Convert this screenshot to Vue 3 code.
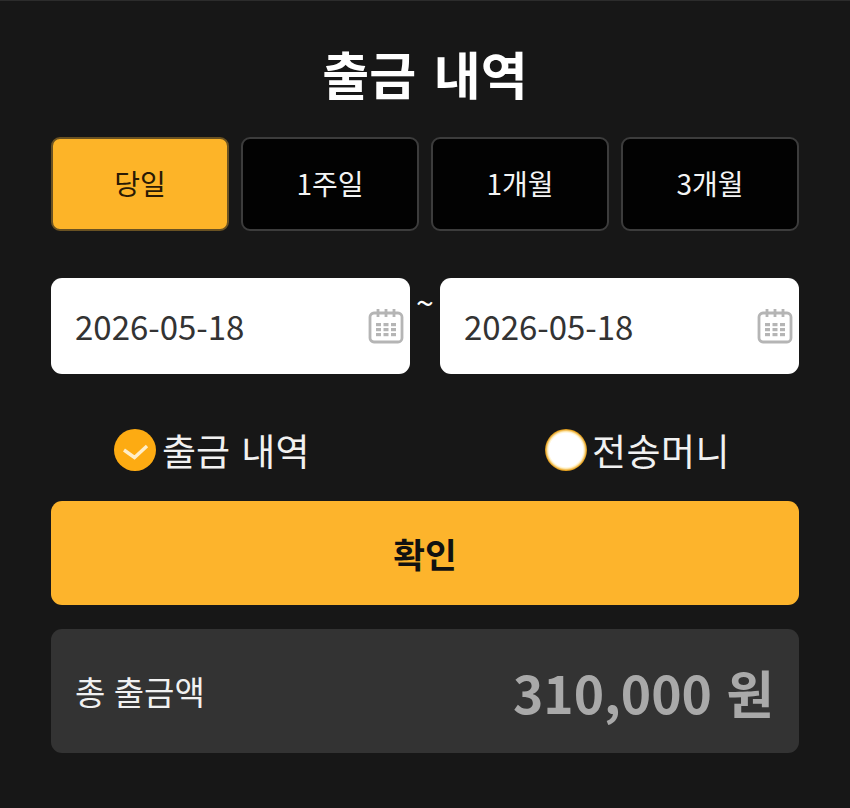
<script setup>
const tabs = ['당일', '1주일', '1개월', '3개월']
const dates = ['2026-05-18', '2026-05-18']
const calendarCells = []
for (const y of [15, 20, 25]) for (const x of [8, 15.5, 23]) calendarCells.push({ x, y })
</script>

<template>
  <main class="page">
    <h1 class="title">출금 내역</h1>

    <div class="tabs">
      <button v-for="(t, i) in tabs" :key="t" class="tab" :class="{ active: i === 0 }">{{ t }}</button>
    </div>

    <div class="dates">
      <template v-for="(d, i) in dates" :key="i">
        <span v-if="i === 1" class="tilde">~</span>
        <div class="date">
          <span>{{ d }}</span>
          <svg class="cal" viewBox="0 0 36 36" width="36" height="36" fill="none">
            <rect x="2" y="5" width="32" height="29" rx="4" stroke="#b5b5b5" stroke-width="2.8" />
            <path d="M10 1V9M18 1V9M26 1V9" stroke="#b5b5b5" stroke-width="2.8" />
            <rect v-for="c in calendarCells" :key="c.x + '-' + c.y" :x="c.x" :y="c.y" width="5" height="3.2" fill="#b5b5b5" />
          </svg>
        </div>
      </template>
    </div>

    <div class="radios">
      <div class="radio">
        <span class="mark on">
          <svg viewBox="0 0 42 42" width="42" height="42" fill="none">
            <path d="M10 21L20.500 28.500L33 17" stroke="#ffeec8" stroke-width="3.400" />
          </svg>
        </span>
        <span>출금 내역</span>
      </div>
      <div class="radio">
        <span class="mark off"></span>
        <span class="label-wide">전송머니</span>
      </div>
    </div>

    <button class="confirm">확인</button>

    <div class="total">
      <span class="total-label">총 출금액</span>
      <span class="total-value">310,000 원</span>
    </div>
  </main>
</template>

<style>
html, body { margin: 0; background: #171717; }
</style>

<style scoped>
.page {
  box-sizing: border-box;
  width: 850px;
  height: 808px;
  padding: 0 51px;
  background: #171717;
  border-top: 1px solid #2c2c2c;
  font-family: "Noto Sans CJK KR", "Noto Sans", sans-serif;
  color: #fff;
  overflow: hidden;
}
.title {
  margin: 0;
  height: 136px;
  padding-top: 38px;
  box-sizing: border-box;
  font-size: 51px;
  line-height: 68px;
  font-weight: 700;
  word-spacing: 6px;
  text-align: center;
}
.tabs {
  display: grid;
  grid-template-columns: repeat(4, 178px);
  justify-content: space-between;
}
.tab {
  height: 94px;
  box-sizing: border-box;
  border: 2px solid #3c3c3c;
  border-radius: 9px;
  background: #020202;
  color: #f4f4f4;
  font: 400 28px/1 "Noto Sans CJK KR", sans-serif;
  padding: 0 0 2px;
}
.tab.active {
  background: #fdb428;
  border-color: #6a5222;
  color: #2a1a05;
}
.dates {
  display: flex;
  margin-top: 47px;
}
.date {
  flex: 0 0 359px;
  height: 96px;
  box-sizing: border-box;
  padding: 0 6px 0 24px;
  background: #fff;
  border-radius: 11px;
  display: flex;
  align-items: center;
  justify-content: space-between;
  color: #333;
  font-size: 33px;
}
.cal { flex: none; }
.tilde {
  flex: 0 0 30px;
  height: 52px;
  text-align: center;
  font-size: 32px;
  line-height: 46px;
}
.radios {
  display: grid;
  grid-template-columns: 1fr 1fr;
  height: 127px;
  box-sizing: border-box;
  padding-top: 25px;
  align-items: center;
}
.radio {
  display: flex;
  align-items: center;
  gap: 6px;
  font-size: 37px;
  word-spacing: 3px;
  color: #f1f1f1;
}
.radio:first-child { padding-left: 63px; }
.radio:last-child { padding-left: 120px; gap: 5px; }
.label-wide { letter-spacing: 0.5px; }
.mark {
  width: 42px;
  height: 42px;
  border-radius: 50%;
  flex: none;
  box-sizing: border-box;
}
.mark.on { background: #fdab12; }
.mark.off { background: radial-gradient(closest-side, #fff 0 80%, #fff0c4 87%, #e9a421 97%, #c48a1c 100%); }
.mark svg { display: block; }
.confirm {
  display: block;
  width: 100%;
  height: 104px;
  border: 0;
  border-radius: 11px;
  background: #fdb42c;
  color: #111;
  font: 700 34.5px/1 "Noto Sans CJK KR", sans-serif;
  padding: 0;
}
.total {
  margin-top: 24px;
  height: 124px;
  box-sizing: border-box;
  padding: 0 25px 0 24px;
  background: #333;
  border-radius: 11px;
  display: flex;
  align-items: center;
  justify-content: space-between;
}
.total-label { font-size: 33px; word-spacing: 1px; color: #f1f1f1; }
.total-value { font-size: 51.5px; font-weight: 700; word-spacing: 3px; color: #a9a9a9; }
</style>
